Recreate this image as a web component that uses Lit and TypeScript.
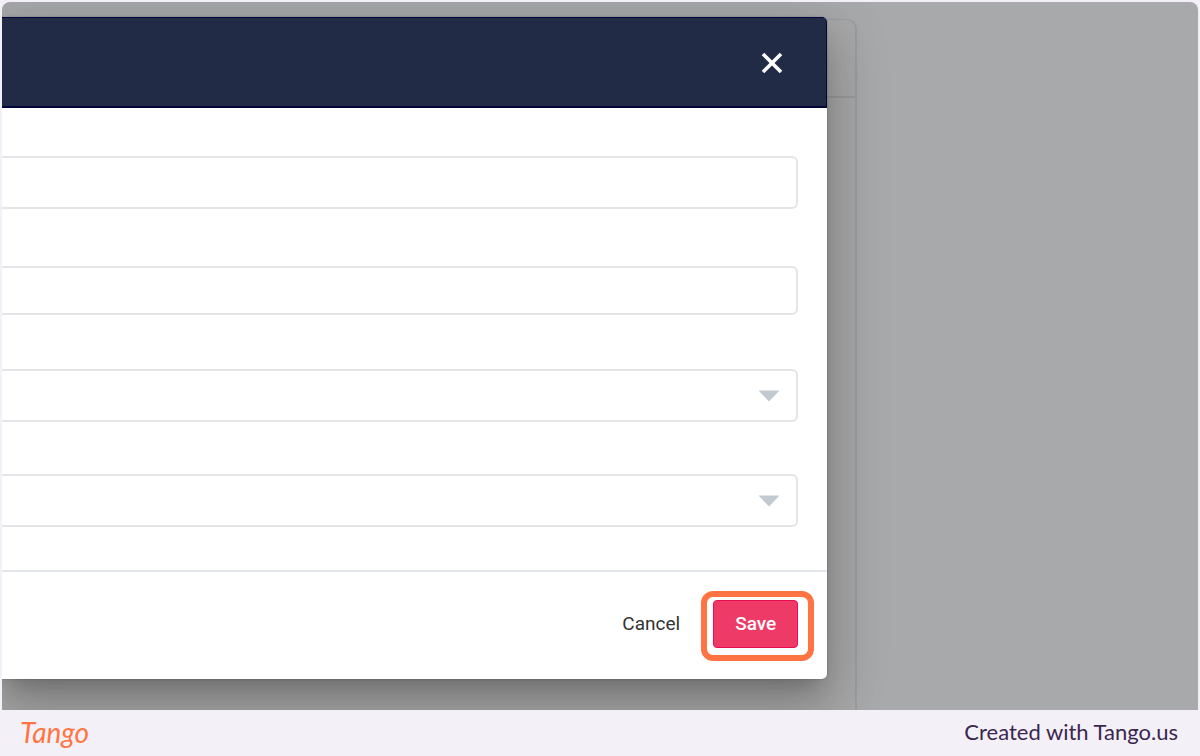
import { LitElement, html, css } from "lit";
import { customElement } from "lit/decorators.js";

@customElement("app-root")
export class AppRoot extends LitElement {
  static styles = css`
    :host {
      display: flex;
      flex-direction: column;
      box-sizing: border-box;
      min-height: 100vh;
      padding: 2px 2px 0;
      background: #f3f1f7;
      font-family: Roboto, "Liberation Sans", sans-serif;
    }
    * {
      box-sizing: border-box;
    }
    .stage {
      flex: 1;
      display: grid;
      overflow: hidden;
      border-radius: 8px 8px 0 0;
      background: #a8a9ab;
    }
    .stage > * {
      grid-area: 1 / 1;
    }
    .panel {
      width: 71.5%;
      margin-top: 17px;
      border: solid #9c9d9e;
      border-width: 1px 2px 0 0;
      border-radius: 0 10px 0 0;
      background: #a9a9a9;
    }
    .panel-head {
      height: 78px;
      border-bottom: 2px solid #9c9c9c;
    }
    .modal {
      align-self: start;
      width: 69%;
      margin-top: 15px;
      border-radius: 0 5px 5px 0;
      background: #ffffff;
      box-shadow:
        0 0 2px rgba(0, 0, 0, 0.3),
        0 14px 20px -9px rgba(0, 0, 0, 0.2),
        0 31px 49px 4px rgba(0, 0, 0, 0.14),
        0 12px 60px 10px rgba(0, 0, 0, 0.12);
    }
    .modal-head {
      display: flex;
      align-items: center;
      justify-content: flex-end;
      height: 91px;
      padding: 2px 40px 0 0;
      border: solid #04053a;
      border-width: 1px 1px 2px 0;
      border-radius: 0 5px 0 0;
      background: #222b46;
    }
    button {
      padding: 0;
      border: 0;
      background: none;
      font: 500 19px/24px Roboto, "Liberation Sans", sans-serif;
      cursor: pointer;
    }
    .close {
      display: flex;
      padding: 2px;
    }
    .fields {
      display: flex;
      flex-direction: column;
      padding: 48px 29px 43px 0;
    }
    .field {
      display: grid;
      align-items: center;
      height: 53px;
      margin-bottom: 52px;
    }
    .field.text {
      margin-bottom: 57px;
    }
    .field.compact {
      height: 49px;
      margin-bottom: 54px;
    }
    .field:last-child {
      margin-bottom: 0;
    }
    .field > * {
      grid-area: 1 / 1;
    }
    .control {
      width: 100%;
      height: 100%;
      margin: 0;
      padding: 0 20px;
      border: 2px solid #e4e5e7;
      border-left: 0;
      border-radius: 0 6px 6px 0;
      outline: 0;
      appearance: none;
      background: #ffffff;
      color: #222b46;
      font: 19px/24px Roboto, "Liberation Sans", sans-serif;
    }
    .arrow {
      justify-self: end;
      margin-right: 18px;
      pointer-events: none;
    }
    .actions {
      display: flex;
      align-items: center;
      justify-content: flex-end;
      gap: 33px;
      padding: 28px 29px 31px;
      border-top: 2px solid #e2e5e9;
    }
    .cancel {
      color: #333333;
      font-weight: 400;
    }
    .target {
      position: relative;
    }
    .target::after {
      content: "";
      position: absolute;
      inset: -9px -16px -13px -12px;
      border: 6px solid #ff7442;
      border-radius: 12px;
      pointer-events: none;
    }
    .save {
      height: 48px;
      padding: 0 21px;
      border: 1px solid #ec0c56;
      border-radius: 4px;
      background: #ee3a67;
      color: #ffffff;
    }
    .credit {
      display: flex;
      align-items: center;
      justify-content: space-between;
      height: 46px;
      padding: 0 20px 2px 18px;
      font: 22px/26px Lato, sans-serif;
      color: #3b2650;
    }
    .brand {
      font: italic 400 28px/32px Lato, sans-serif;
      color: #ff7442;
      text-decoration: none;
    }
  `;

  private select(label: string) {
    return html`<div class="field">
      <select class="control" aria-label=${label}></select>
      <svg class="arrow" width="22" height="12" viewBox="0 0 22 12" aria-hidden="true">
        <path d="M0.5 0.5h21L11 11.5z" fill="#c3c9d0" />
      </svg>
    </div>`;
  }

  render() {
    return html`
      <main class="stage">
        <div class="panel"><div class="panel-head"></div></div>
        <form class="modal" role="dialog" @submit=${(e: Event) => e.preventDefault()}>
          <header class="modal-head">
            <button class="close" type="button" aria-label="Close">
              <svg width="24" height="24" viewBox="0 0 24 24" aria-hidden="true">
                <path d="M3 3L21 21M21 3L3 21" fill="none" stroke="#ffffff" stroke-width="3.6" />
              </svg>
            </button>
          </header>
          <div class="fields">
            <div class="field text"><input class="control" type="text" aria-label="Name" /></div>
            <div class="field compact"><input class="control" type="text" aria-label="Description" /></div>
            ${this.select("Type")} ${this.select("Category")}
          </div>
          <footer class="actions">
            <button class="cancel" type="button">Cancel</button>
            <div class="target"><button class="save" type="submit">Save</button></div>
          </footer>
        </form>
      </main>
      <footer class="credit">
        <a class="brand" href="#">Tango</a>
        <span>Created with Tango.us</span>
      </footer>
    `;
  }
}
